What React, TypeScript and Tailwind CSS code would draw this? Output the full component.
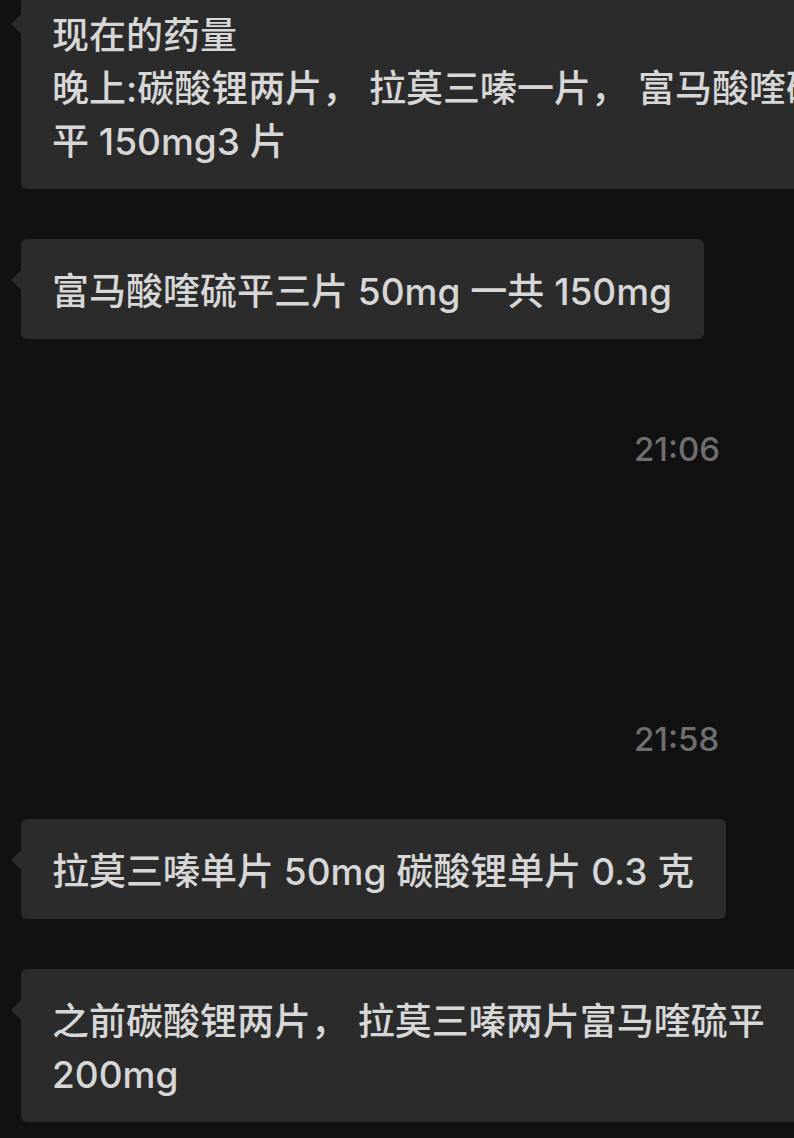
import React from 'react';

function Bubble({ text, className = '' }: { text: string; className?: string }) {
  return (
    <div className={`relative w-fit max-w-[852px] rounded-[6px] bg-[#2b2b2b] pl-[31px] pr-[32px] pt-[26px] pb-[21px] ${className}`}>
      {/* little tail on the left */}
      <div className="absolute left-[-7px] top-[34px] h-[14px] w-[14px] rotate-45 rounded-[2px] bg-[#2b2b2b]" />
      <p className="relative whitespace-pre-line text-[37px] font-medium leading-[53px] text-[#d7d7d7]">{text}</p>
    </div>
  );
}

function TimeStamp({ time, className = '' }: { time: string; className?: string }) {
  return (
    <div className={`pl-[613px] text-[33px] font-medium leading-[40px] text-[#6f6f6f] ${className}`}>{time}</div>
  );
}

export default function App() {
  return (
    <div className="h-[1138px] w-full overflow-hidden bg-[#111111] font-['Inter','Noto_Sans_CJK_SC',sans-serif]">
      <div className="flex w-[900px] flex-col items-start pl-[21px]">
        <Bubble
          className="-mt-[17px]"
          text={'现在的药量\n晚上:碳酸锂两片， 拉莫三嗪一片， 富马酸喹硫平 150mg3 片'}
        />
        <Bubble className="mt-[50px]" text="富马酸喹硫平三片 50mg 一共 150mg" />

        <TimeStamp className="mt-[90px]" time="21:06" />
        <TimeStamp className="mt-[250px]" time="21:58" />

        <Bubble className="mt-[60px]" text="拉莫三嗪单片 50mg 碳酸锂单片 0.3 克" />
        <Bubble className="mt-[50px]" text="之前碳酸锂两片， 拉莫三嗪两片富马喹硫平 200mg" />
      </div>
    </div>
  );
}
